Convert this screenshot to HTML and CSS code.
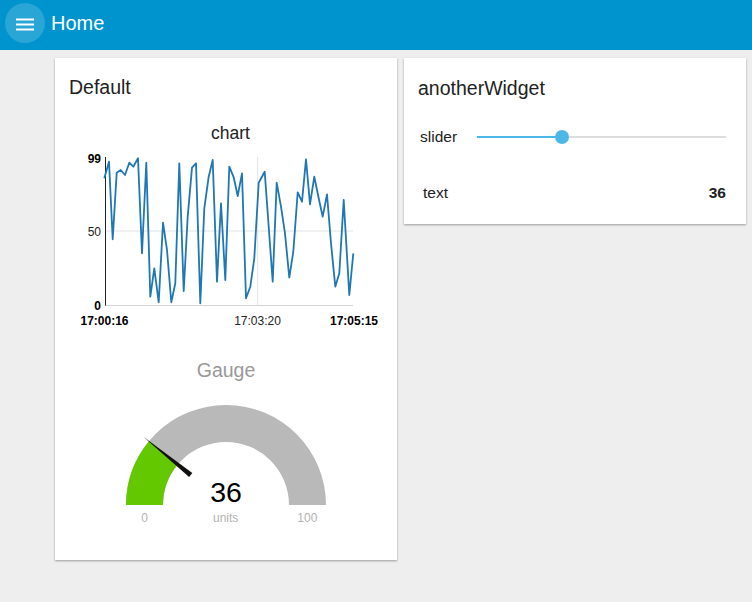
FILE: index.html
```html
<!DOCTYPE html>
<html>
<head>
<meta charset="utf-8">
<link rel="stylesheet" href="styles.css">
</head>
<body>
<header class="topbar">
  <div class="menu-btn">
    <svg width="40" height="40" viewBox="0 0 40 40"><rect x="11" y="15.5" width="18" height="2" fill="#fff"/><rect x="11" y="20.5" width="18" height="2" fill="#fff"/><rect x="11" y="25.5" width="18" height="2" fill="#fff"/></svg>
  </div>
  <div class="page-title">Home</div>
</header>
<main class="board">
  <section class="card card-default">
    <div class="card-title">Default</div>
    <svg class="chart" width="342" height="236" viewBox="55 99 342 236">
      <text class="chart-title" x="230.5" y="139">chart</text>
      <line x1="105" y1="231" x2="353" y2="231" stroke="#e2e2e2" stroke-width="1"/>
      <line x1="257.7" y1="157" x2="257.7" y2="305" stroke="#e2e2e2" stroke-width="1"/>
      <line x1="105" y1="305.5" x2="353" y2="305.5" stroke="#d4d4d4" stroke-width="1"/>
      <line x1="105.5" y1="157" x2="105.5" y2="305.5" stroke="#222" stroke-width="1"/>
      <text class="ylab bold" x="101" y="162.5">99</text>
      <text class="ylab" x="101" y="235.5">50</text>
      <text class="ylab bold" x="101" y="309.5">0</text>
      <text class="xlab bold" x="104.5" y="324.5" text-anchor="middle">17:00:16</text>
      <text class="xlab" x="257.5" y="324.5" text-anchor="middle">17:03:20</text>
      <text class="xlab bold" x="378" y="324.5" text-anchor="end">17:05:15</text>
      <polyline fill="none" stroke="#1f77b4" stroke-width="1.8" stroke-linejoin="round" points="104.3,178.3 109,161.7 112.7,239.3 116.7,172.7 120.7,170 125,175 129.3,162.7 133.3,166.7 138,158.3 142,253.3 146.3,162.7 150.3,296.7 154.3,268.3 158.7,302.3 163,222.7 167,250 171.3,302.3 175.3,283.3 179.3,163.3 183.7,291 187.7,216.7 192,167.7 196,163.3 200.3,303.3 204.3,208.3 208.7,176.7 212.7,160 217,281.7 221,203.3 225.3,280 229.3,166.7 233.7,177.3 237.7,196 242,173.3 246,298.3 250.3,286.7 254.3,258.3 258.7,182.7 264.7,171.7 272.7,281.7 276.7,182.7 281,206.7 285,233.3 289.3,277.7 293.3,251.7 297.7,192.3 302,201.7 306,159.3 310,204.3 314.3,176.7 318.7,198.3 322.7,216.7 327,194.3 331,243.3 335.3,286.7 339.3,273.3 343.7,200 349.3,295 353.3,253.3"/>
    </svg>
    <svg class="gauge" width="342" height="225" viewBox="55 335 342 225">
      <text class="gauge-title" x="226" y="376.5">Gauge</text>
      <path d="M126 505 A100 100 0 0 1 326 505 L289 505 A63 63 0 0 0 163 505 Z" fill="#b9b9b9"/>
      <path d="M126 505 A100 100 0 0 1 149.4 440.7 L177.7 464.5 A63 63 0 0 0 163 505 Z" fill="#63c800"/>
      <polygon points="143.3,436.7 189.1,476.9 192.3,473.1" fill="#111"/>
      <text class="gauge-value" x="226" y="502">36</text>
      <text class="gauge-small" x="144.5" y="522">0</text>
      <text class="gauge-small" x="225.7" y="522">units</text>
      <text class="gauge-small" x="307.3" y="522">100</text>
    </svg>
  </section>
  <section class="card card-widget">
    <div class="card-title">anotherWidget</div>
    <div class="row slider-row">
      <span class="label slider-label">slider</span>
      <div class="track">
        <div class="track-fill" style="width:85px"></div>
        <div class="thumb" style="left:85px"></div>
      </div>
    </div>
    <div class="row text-row">
      <span class="label">text</span>
      <span class="value">36</span>
    </div>
  </section>
</main>
</body>
</html>
```
FILE: styles.css
```css
html, body {
  margin: 0;
  padding: 0;
}
body {
  background: #eeeeee;
  font-family: "Liberation Sans", Arial, sans-serif;
  color: #222;
  width: 752px;
  height: 602px;
  overflow: hidden;
}
.topbar {
  height: 50px;
  background: #0094ce;
  display: flex;
  align-items: flex-start;
  padding: 3px 0 0 5px;
  box-sizing: border-box;
  gap: 6px;
}
.menu-btn {
  width: 40px;
  height: 40px;
  border-radius: 50%;
  background: rgba(255, 255, 255, 0.16);
}
.menu-btn svg {
  display: block;
}
.page-title {
  color: #fff;
  font-size: 20px;
  line-height: 40px;
}
.board {
  display: flex;
  align-items: flex-start;
  gap: 7px;
  padding: 8px 0 0 55px;
}
.card {
  width: 342px;
  background: #fff;
  box-shadow: 0 1px 2px rgba(0, 0, 0, 0.35);
  box-sizing: border-box;
}
.card-default {
  height: 502px;
}
.card-widget {
  height: 166px;
  padding-bottom: 7px;
}
.card-title {
  font-size: 19.5px;
  line-height: 24px;
  padding: 17px 14px 0 14px;
  color: #222;
}
.card-widget .card-title {
  padding-top: 18px;
}
.chart, .gauge {
  display: block;
}
.chart-title {
  font-size: 17.5px;
  fill: #222;
  text-anchor: middle;
}
.ylab {
  font-size: 12px;
  fill: #222;
  text-anchor: end;
}
.xlab {
  font-size: 12px;
  fill: #222;
}
.bold {
  font-weight: bold;
  fill: #000;
}
.gauge-title {
  font-size: 19.5px;
  fill: #999;
  text-anchor: middle;
}
.gauge-value {
  font-size: 28.5px;
  fill: #000;
  text-anchor: middle;
}
.gauge-small {
  font-size: 12px;
  fill: #b3b3b3;
  text-anchor: middle;
}
.row {
  height: 48px;
  display: flex;
  align-items: center;
  font-size: 15.5px;
}
.slider-row {
  margin-top: 13px;
  padding: 0 20px 0 16px;
}
.slider-label {
  width: 57px;
  flex: none;
}
.track {
  position: relative;
  flex: 1;
  height: 2px;
  background: #dddddd;
}
.track-fill {
  height: 2px;
  background: #4db8e8;
}
.thumb {
  position: absolute;
  top: -6px;
  width: 14px;
  height: 14px;
  margin-left: -7px;
  border-radius: 50%;
  background: #4db8e8;
}
.text-row {
  margin-top: 8px;
  padding: 0 20px 0 19px;
  justify-content: space-between;
}
.value {
  font-weight: bold;
}
```
